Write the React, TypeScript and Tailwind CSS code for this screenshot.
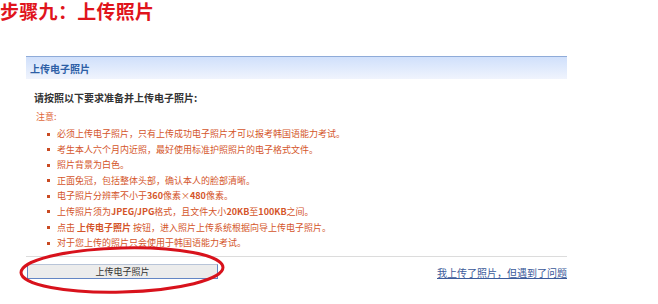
import type { JSX } from "react";

const cjk = "font-['Noto_Sans_CJK_SC','Noto_Sans',sans-serif]";

const notes: JSX.Element[] = [
  <>必须上传电子照片，只有上传成功电子照片才可以报考韩国语能力考试。</>,
  <>考生本人六个月内近照，最好使用标准护照照片的电子格式文件。</>,
  <>照片背景为白色。</>,
  <>正面免冠，包括整体头部，确认本人的脸部清晰。</>,
  <>
    电子照片分辨率不小于<b>360</b>像素×<b>480</b>像素。
  </>,
  <>
    上传照片须为<b>JPEG/JPG</b>格式，且文件大小<b>20KB</b>至<b>100KB</b>之间。
  </>,
  <>
    点击 <b>上传电子照片</b> 按钮，进入照片上传系统根据向导上传电子照片。
  </>,
  <>对于您上传的照片只会使用于韩国语能力考试。</>,
];

export default function App(): JSX.Element {
  return (
    <div className={`relative w-[658px] h-[304px] bg-white ${cjk}`}>
      <h1 className="text-[19px] leading-[22px] font-bold text-[#e0141c] tracking-[0.3px] whitespace-nowrap">
        步骤九：上传照片
      </h1>

      <div className="ml-[26px] mt-[34px] w-[541px]">
        <div className="h-[23px] border-t border-[#8fabd8] bg-gradient-to-b from-[#d0e0fb] to-[#f0f4fd] flex items-center pl-[4px]">
          <span className="text-[10px] font-bold text-[#2d5fa6]">上传电子照片</span>
        </div>

        <p className="mt-[12px] ml-[8px] text-[10px] leading-[14px] font-bold text-[#333]">
          请按照以下要求准备并上传电子照片:
        </p>
        <p className="mt-[6px] ml-[10px] text-[9px] leading-[12px] text-[#e0683a]">注意:</p>

        <ul className="mt-[5px] ml-[21px] flex flex-col gap-[3.6px]">
          {notes.map((n, i) => (
            <li key={i} className="flex items-center gap-[7px] text-[9px] leading-[12px] text-[#d4552a]">
              <span className="w-[3px] h-[3px] bg-[#c94a22] shrink-0" />
              <span>{n}</span>
            </li>
          ))}
        </ul>

        <div className="mt-[7px] border-t border-[#dcdcdc]" />

        <div className="mt-[7px] flex items-start justify-between">
          <button className="ml-[1px] w-[191px] h-[15px] bg-[#ececec] border border-[#6486c4] border-t-[#b8c4d8] text-[9px] leading-[13px] text-[#333]">
            上传电子照片
          </button>
          <a className="mt-[2px] text-[10px] leading-[13px] text-[#3b5a9a] underline">
            我上传了照片，但遇到了问题
          </a>
        </div>
      </div>

      <svg
        className="absolute left-[17px] top-[244px] pointer-events-none"
        width="212"
        height="52"
        viewBox="0 0 212 52"
      >
        <ellipse
          cx="105"
          cy="26"
          rx="101"
          ry="22"
          fill="none"
          stroke="#d8121c"
          strokeWidth="3"
          transform="rotate(-1.5 105 26)"
        />
      </svg>
    </div>
  );
}
